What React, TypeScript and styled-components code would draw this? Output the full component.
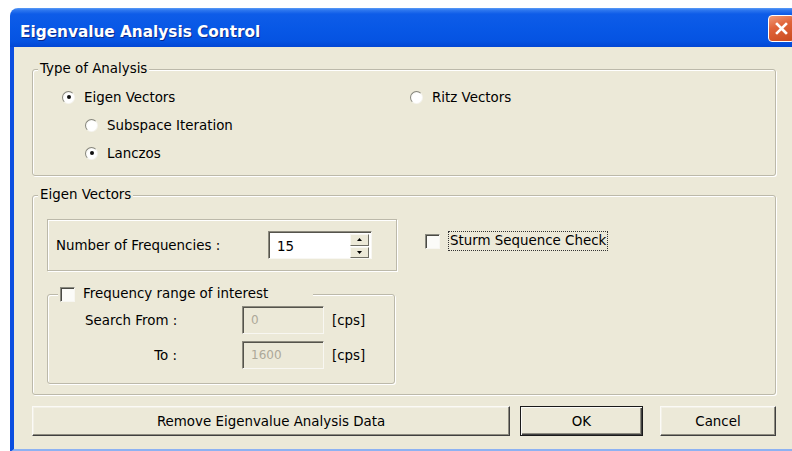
import React from "react";
import styled, { createGlobalStyle } from "styled-components";

const Global = createGlobalStyle`
  html, body { margin: 0; padding: 0; background: #ffffff; overflow: hidden; }
  body { width: 792px; height: 451px; }
`;

const beige = "#ECE9D8";
const etch = "#bcb9aa";

const Window = styled.div`
  margin: 8px 0 0 10px;
  width: 790px;
  display: flex;
  flex-direction: column;
  font-family: "DejaVu Sans", Tahoma, Verdana, sans-serif;
  font-size: 13.4px;
  color: #000;
`;

const TitleBar = styled.div`
  height: 39px;
  box-sizing: border-box;
  border-radius: 8px 8px 0 0;
  background: linear-gradient(
    180deg,
    #5a9cf6 0px,
    #2f78ef 2px,
    #0e5ce8 6px,
    #0858e6 50%,
    #0553e2 85%,
    #0247d4 100%
  );
  display: flex;
  align-items: flex-start;
  padding-left: 10px;
`;

const Title = styled.span`
  margin-top: 15px;
  font-family: "DejaVu Sans", sans-serif;
  font-weight: bold;
  font-size: 15.3px;
  line-height: 18px;
  color: #ffffff;
  text-shadow: 1px 1px 0 #0b2a8c;
`;

const CloseButton = styled.div`
  margin: 7px 5px 0 auto;
  width: 27px;
  height: 27px;
  box-sizing: border-box;
  border: 1px solid #ffffff;
  border-radius: 4px;
  background: linear-gradient(160deg, #f09a77 0%, #e0643a 40%, #c94a1e 100%);
  display: flex;
  align-items: center;
  justify-content: center;
`;

const Body = styled.div`
  background: ${beige};
  border-left: 4px solid #0b4ee0;
  border-right: 4px solid #0b4ee0;
  border-bottom: 3px solid #8db2f2;
  padding: 22px 0 13px 18px;
  display: flex;
  flex-direction: column;
`;

const Group = styled.div<{ $w: number; $h?: number; $top?: number }>`
  width: ${(p) => p.$w}px;
  ${(p) => (p.$h ? `height: ${p.$h}px;` : "")}
  margin-top: ${(p) => p.$top ?? 0}px;
  box-sizing: border-box;
  border: 1px solid ${etch};
  border-radius: 3px;
  box-shadow: inset 1px 1px 0 #ffffff, 1px 1px 0 #ffffff;
  display: flex;
  flex-direction: column;
`;

const Caption = styled.div<{ $left: number; $w?: number }>`
  align-self: flex-start;
  margin: -9px 0 -7px ${(p) => p.$left}px;
  padding: 0 2px;
  ${(p) => (p.$w ? `width: ${p.$w}px; box-sizing: border-box;` : "")}
  height: 16px;
  line-height: 16px;
  background: ${beige};
  display: flex;
  align-items: center;
  gap: 8px;
`;

const AnalysisGrid = styled.div`
  display: grid;
  grid-template-columns: 348px 1fr;
  grid-auto-rows: 28px;
  padding: 13px 0 8px 29px;
`;

const Option = styled.label<{ $indent?: number }>`
  display: flex;
  align-items: center;
  gap: 9px;
  padding-left: ${(p) => p.$indent ?? 0}px;
  white-space: nowrap;
`;

const Radio = styled.span<{ $on?: boolean }>`
  width: 13px;
  height: 13px;
  box-sizing: border-box;
  border-radius: 50%;
  border: 1px solid;
  border-color: #85857c #f6f5f0 #f6f5f0 #85857c;
  background: radial-gradient(circle at 60% 60%, #ffffff 0%, #ffffff 55%, #e4e2d6 100%);
  display: flex;
  align-items: center;
  justify-content: center;
  &::after {
    content: "";
    width: 4px;
    height: 4px;
    border-radius: 50%;
    background: ${(p) => (p.$on ? "#111" : "transparent")};
  }
`;

const Check = styled.span`
  width: 15px;
  height: 15px;
  flex: none;
  box-sizing: border-box;
  border: 1px solid;
  border-color: #8a8a80 #f7f6f1 #f7f6f1 #8a8a80;
  box-shadow: inset 1px 1px 0 #4a4a44;
  background: #fbfbf8;
`;

const VecBody = styled.div`
  display: flex;
  gap: 28px;
  padding: 23px 0 10px 14px;
`;

const LeftCol = styled.div`
  display: flex;
  flex-direction: column;
  gap: 23px;
`;

const EtchedBox = styled.div`
  width: 350px;
  height: 52px;
  box-sizing: border-box;
  border: 1px solid ${etch};
  box-shadow: inset 1px 1px 0 #ffffff, 1px 1px 0 #ffffff;
  display: flex;
  align-items: center;
  padding-left: 8px;
`;

const FieldLabel = styled.span<{ $w: number; $right?: boolean }>`
  width: ${(p) => p.$w}px;
  flex: none;
  text-align: ${(p) => (p.$right ? "right" : "left")};
  white-space: nowrap;
`;

const Sunken = styled.div<{ $w: number; $disabled?: boolean; $offset?: number }>`
  width: ${(p) => p.$w}px;
  height: 28px;
  margin-left: ${(p) => p.$offset ?? 0}px;
  box-sizing: border-box;
  border: 1px solid;
  border-color: #8c8a7e #f8f7f2 #f8f7f2 #8c8a7e;
  box-shadow: inset 1px 1px 0 #55544c;
  background: ${(p) => (p.$disabled ? beige : "#ffffff")};
  color: ${(p) => (p.$disabled ? "#aca899" : "#000")};
  display: flex;
  align-items: center;
  padding-left: 8px;
  font-size: ${(p) => (p.$disabled ? "12px" : "13.4px")};
`;

const SpinValue = styled.span`
  flex: 1;
  margin-top: 2px;
`;

const SpinStack = styled.div`
  width: 19px;
  height: 24px;
  margin: 2px 2px 0 0;
  display: flex;
  flex-direction: column;
  gap: 1px;
`;

const SpinHalf = styled.div`
  flex: 1;
  box-sizing: border-box;
  background: ${beige};
  border: 1px solid;
  border-color: #f8f7f2 #6e6d64 #6e6d64 #f8f7f2;
  display: flex;
  align-items: center;
  justify-content: center;
`;

const RangeRows = styled.div`
  display: flex;
  flex-direction: column;
  gap: 7px;
  padding: 11px 0 0 37px;
`;

const RangeRow = styled.div`
  display: flex;
  align-items: center;
`;

const Unit = styled.span`
  margin-left: 8px;
`;

const SturmOption = styled.label`
  margin-top: 13px;
  align-self: flex-start;
  display: flex;
  align-items: center;
  gap: 9px;
  white-space: nowrap;
`;

const Focus = styled.span`
  outline: 1px dotted #333;
  outline-offset: 0;
  padding: 0 1px;
  line-height: 18px;
`;

const ButtonRow = styled.div`
  display: flex;
  margin-top: 11px;
`;

const Button = styled.div<{ $w: number; $gap?: number; $default?: boolean }>`
  width: ${(p) => p.$w}px;
  height: 30px;
  margin-left: ${(p) => p.$gap ?? 0}px;
  box-sizing: border-box;
  background: ${beige};
  border: 1px solid;
  border-color: ${(p) =>
    p.$default ? "#1a1a1a" : "#fbfaf6 #404040 #404040 #fbfaf6"};
  box-shadow: ${(p) =>
    p.$default
      ? "inset 1px 1px 0 #fbfaf6, inset -1px -1px 0 #404040, inset -2px -2px 0 #8e8c80"
      : "inset -1px -1px 0 #8e8c80, inset 1px 1px 0 #f2f0e6"};
  display: flex;
  align-items: center;
  justify-content: center;
`;

const Arrow = ({ up }: { up?: boolean }) => (
  <svg width="5" height="3" viewBox="0 0 5 3">
    <path d={up ? "M0 3 L2.5 0 L5 3 Z" : "M0 0 L5 0 L2.5 3 Z"} fill="#000" />
  </svg>
);

export default function App() {
  return (
    <>
      <Global />
      <Window>
        <TitleBar>
          <Title>Eigenvalue Analysis Control</Title>
          <CloseButton>
            <svg width="15" height="15" viewBox="0 0 15 15">
              <path d="M3 3 L12 12 M12 3 L3 12" stroke="#fff" strokeWidth="2.6" strokeLinecap="square" />
            </svg>
          </CloseButton>
        </TitleBar>
        <Body>
          <Group $w={744}>
            <Caption $left={5}>Type of Analysis</Caption>
            <AnalysisGrid>
              <Option>
                <Radio $on />
                Eigen Vectors
              </Option>
              <Option>
                <Radio />
                Ritz Vectors
              </Option>
              <Option $indent={23}>
                <Radio />
                Subspace Iteration
              </Option>
              <span />
              <Option $indent={23}>
                <Radio $on />
                Lanczos
              </Option>
            </AnalysisGrid>
          </Group>

          <Group $w={744} $top={19}>
            <Caption $left={5}>Eigen Vectors</Caption>
            <VecBody>
              <LeftCol>
                <EtchedBox>
                  <FieldLabel $w={212}>Number of Frequencies :</FieldLabel>
                  <Sunken $w={104}>
                    <SpinValue>15</SpinValue>
                    <SpinStack>
                      <SpinHalf>
                        <Arrow up />
                      </SpinHalf>
                      <SpinHalf>
                        <Arrow />
                      </SpinHalf>
                    </SpinStack>
                  </Sunken>
                </EtchedBox>
                <Group $w={348} $h={90}>
                  <Caption $left={10} $w={255}>
                    <Check />
                    Frequency range of interest
                  </Caption>
                  <RangeRows>
                    <RangeRow>
                      <FieldLabel $w={92} $right>
                        Search From :
                      </FieldLabel>
                      <Sunken $w={82} $disabled $offset={65}>
                        0
                      </Sunken>
                      <Unit>[cps]</Unit>
                    </RangeRow>
                    <RangeRow>
                      <FieldLabel $w={92} $right>
                        To :
                      </FieldLabel>
                      <Sunken $w={82} $disabled $offset={65}>
                        1600
                      </Sunken>
                      <Unit>[cps]</Unit>
                    </RangeRow>
                  </RangeRows>
                </Group>
              </LeftCol>
              <SturmOption>
                <Check />
                <Focus>Sturm Sequence Check</Focus>
              </SturmOption>
            </VecBody>
          </Group>

          <ButtonRow>
            <Button $w={478}>Remove Eigenvalue Analysis Data</Button>
            <Button $w={123} $gap={10} $default>
              OK
            </Button>
            <Button $w={116} $gap={17}>
              Cancel
            </Button>
          </ButtonRow>
        </Body>
      </Window>
    </>
  );
}
